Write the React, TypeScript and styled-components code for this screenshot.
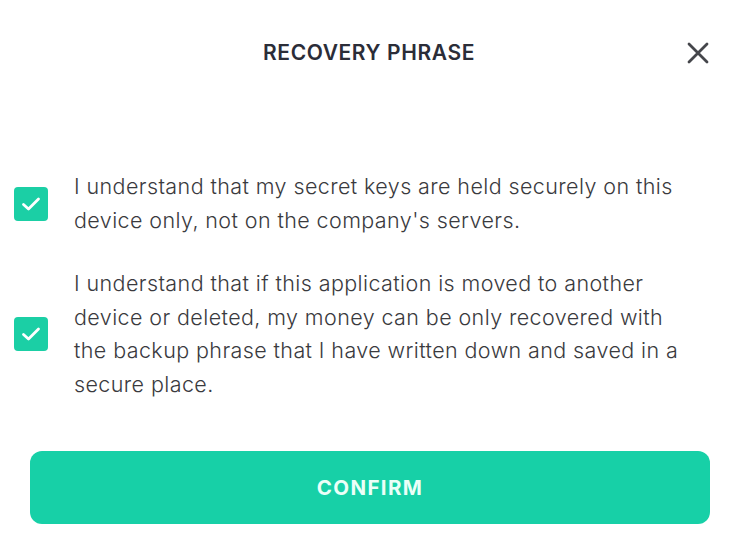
import styled, { createGlobalStyle } from 'styled-components';

const GlobalStyle = createGlobalStyle`
    body {
        margin: 0;
        background: #ffffff;
        font-family: Inter, "Noto Sans", sans-serif;
    }
`;

const Page = styled.div`
    width: 738px;
    height: 542px;
    display: flex;
    flex-direction: column;
    box-sizing: border-box;
`;

const Header = styled.header`
    height: 105px;
    display: grid;
    grid-template-columns: 1fr auto 1fr;
    align-items: center;
    padding: 0 28px 0 28px;
    box-sizing: border-box;
`;

const Title = styled.h1`
    grid-column: 2;
    margin: 0;
    font-size: 21px;
    font-weight: 600;
    color: #2b2d38;
    letter-spacing: 0.6px;
`;

const CloseButton = styled.button`
    grid-column: 3;
    justify-self: end;
    width: 24px;
    height: 24px;
    padding: 0;
    border: none;
    background: none;
    display: flex;
    align-items: center;
    justify-content: center;
    cursor: pointer;
`;

const Terms = styled.ul`
    list-style: none;
    margin: 65px 0 0 0;
    padding: 0;
    display: flex;
    flex-direction: column;
    gap: 30px;
`;

const Term = styled.li`
    display: flex;
    align-items: center;
    gap: 26px;
    padding: 0 46px 0 14px;
`;

const CheckBox = styled.span<{ $checked: boolean }>`
    flex: none;
    width: 34px;
    height: 34px;
    border-radius: 4px;
    background: ${props => props.$checked ? '#1bcfa5' : '#ffffff'};
    display: flex;
    align-items: center;
    justify-content: center;
`;

const TermText = styled.p`
    margin: 0;
    font-size: 21.5px;
    font-weight: 300;
    letter-spacing: 0.4px;
    line-height: 33.5px;
    color: #3a3a3e;
`;

const Footer = styled.div`
    margin-top: auto;
    padding: 0 28px 18px 30px;
`;

const ConfirmButton = styled.button`
    width: 100%;
    height: 73px;
    border: none;
    border-radius: 12px;
    background: #17d0a7;
    color: #ebfff8;
    font-family: Inter, "Noto Sans", sans-serif;
    font-size: 20.5px;
    font-weight: 700;
    letter-spacing: 1.4px;
    cursor: pointer;
`;

const terms = [
    "I understand that my secret keys are held securely on this device only, not on the company's servers.",
    "I understand that if this application is moved to another device or deleted, my money can be only recovered with the backup phrase that I have written down and saved in a secure place.",
];

function Check() {
    return (
        <svg width="20" height="16" viewBox="0 0 20 16" fill="none">
            <path d="M2.5 8.5 L7.5 13 L17.5 3" stroke="#ffffff" strokeWidth="2.8" strokeLinecap="round" strokeLinejoin="round" />
        </svg>
    );
}

export default function App() {
    return (
        <Page>
            <GlobalStyle />
            <Header>
                <Title>RECOVERY PHRASE</Title>
                <CloseButton aria-label="Close">
                    <svg width="22" height="22" viewBox="0 0 22 22">
                        <path d="M2 2 L20 20 M20 2 L2 20" stroke="#45464b" strokeWidth="2.8" strokeLinecap="round" />
                    </svg>
                </CloseButton>
            </Header>
            <Terms>
                {terms.map(text => (
                    <Term key={text}>
                        <CheckBox $checked>
                            <Check />
                        </CheckBox>
                        <TermText>{text}</TermText>
                    </Term>
                ))}
            </Terms>
            <Footer>
                <ConfirmButton>CONFIRM</ConfirmButton>
            </Footer>
        </Page>
    );
}
